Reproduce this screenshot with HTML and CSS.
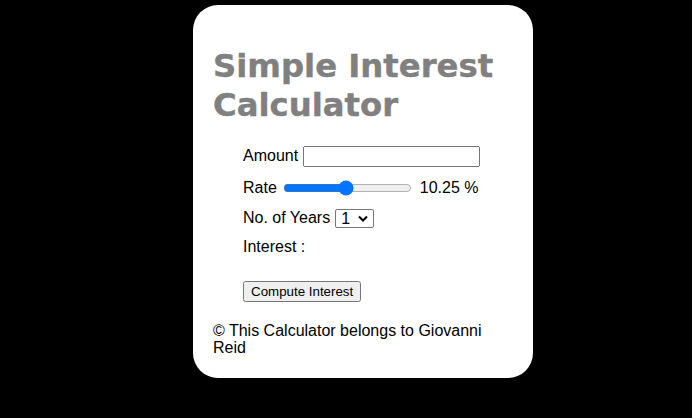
FILE: index.html
```html
<!DOCTYPE html>
<html>
<head>
<meta charset="utf-8">
<link rel="stylesheet" href="styles.css">
</head>
<body>
<main class="card">
  <h1 class="title">Simple Interest Calculator</h1>
  <form class="form">
    <div class="row">Amount <input type="text" class="amount"></div>
    <div class="row rate-row">Rate <input type="range" class="rate" min="1" max="20" step="0.25" value="10.25"> <span class="rate-val">10.25 %</span></div>
    <div class="row">No. of Years
      <span class="select-wrap">
        <select class="years"><option>1</option></select>
        <svg class="chev" width="10" height="7" viewBox="0 0 10 7"><path d="M1 1.5 L5 5.5 L9 1.5" fill="none" stroke="#000" stroke-width="2"/></svg>
      </span>
    </div>
    <div class="row int-row">Interest :</div>
    <div class="row btn-row"><button type="button" class="btn">Compute Interest</button></div>
  </form>
  <p class="footer">© This Calculator belongs to Giovanni Reid</p>
</main>
</body>
</html>
```
FILE: styles.css
```css
html, body {
  background: #000;
}
body {
  margin: 0;
  padding: 5px 0 0 34px;
  display: flex;
  justify-content: center;
  font-family: "Liberation Sans", Arial, sans-serif;
  font-size: 16px;
  color: #000;
}
.card {
  width: 300px;
  background: #fff;
  border-radius: 25px;
  padding: 26px 20px 22px;
}
.title {
  font-family: Verdana, "DejaVu Sans", sans-serif;
  font-weight: bold;
  font-size: 32.3px;
  line-height: 39px;
  color: #808080;
  margin: 16px 0 20px;
  -webkit-text-stroke: 0.4px #808080;
}
.form {
  padding-left: 30px;
}
.row {
  display: flex;
  align-items: center;
  gap: 4px;
  height: 22px;
  margin-bottom: 9px;
}
.rate-row {
  position: relative;
  top: 1px;
}
.amount {
  margin: 0 0 0 1px;
  width: 169px;
  height: 15px;
}
.rate {
  margin: 2px 4px 2px 2px;
  width: 129px;
}
.select-wrap {
  position: relative;
  display: inline-flex;
  margin-left: 1px;
}
.years {
  appearance: none;
  -webkit-appearance: none;
  margin: 0;
  width: 39px;
  height: 19px;
  padding: 0 0 0 5px;
  border: 1px solid #767676;
  border-radius: 2px;
  background: #fff;
  font-family: "Liberation Sans", Arial, sans-serif;
  font-size: 16px;
  line-height: 17px;
  color: #000;
}
.chev {
  position: absolute;
  right: 6px;
  top: 6px;
  pointer-events: none;
}
.int-row {
  position: relative;
  top: -2px;
}
.btn-row {
  margin-top: 20px;
}
.btn {
  font-family: "Liberation Sans", Arial, sans-serif;
  font-size: 13.33px;
  margin: 0;
  padding: 1px 6px;
}
.footer {
  margin: 20px 0 0;
  line-height: 17px;
}
```
